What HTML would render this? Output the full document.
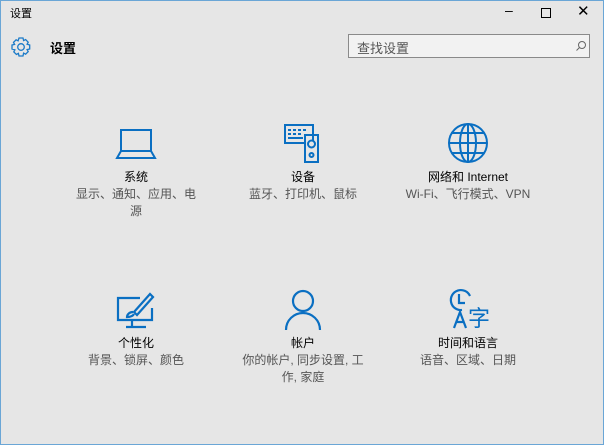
<html><head><style>
body{margin:0;width:604px;height:445px;background:#e6e6e6;font-family:"Liberation Sans","Noto Sans CJK SC",sans-serif;overflow:hidden;position:relative}
.win{position:absolute;left:0;top:0;width:602px;height:443px;border:1px solid #6aa6d6;border-top:1px solid #6aa6d6}
.t{position:absolute;font-size:11px;color:#000}
.item{position:absolute;width:150px;text-align:center;font-size:12px;line-height:17px}
.item .h{color:#000}
.item .s{color:#555}
.item svg{display:block;margin:0 auto 5px}
</style></head><body><div class="win"></div>
<div class="t" style="left:10px;top:5px">设置</div>
<div class="t" style="left:505px;top:2px;font-size:14px">–</div>
<div style="position:absolute;left:541px;top:8px;width:8px;height:8px;border:1px solid #000"></div>
<div class="t" style="left:577px;top:2px;font-size:15px">✕</div>
<svg style="position:absolute;left:10px;top:36px" width="22" height="22" viewBox="0 0 22 22"><g fill="none" stroke="#1a7ac8" stroke-width="1.3"><path d="M9 2h4l.6 2.6 2-1 2.6 2.6-1.1 2 2.6.8v4l-2.6.6 1.1 2-2.6 2.6-2-1.1L13 20H9l-.6-2.6-2 1.1-2.6-2.6 1.1-2L2 13V9l2.6-.6-1.1-2 2.6-2.6 2 1z"/><circle cx="11" cy="11" r="3.3"/></g></svg>
<div class="t" style="left:50px;top:38px;font-size:13px;font-weight:bold">设置</div>
<div style="position:absolute;left:348px;top:34px;width:242px;height:24px;border:1px solid #8a8a8a;background:#f2f2f2;box-sizing:border-box"></div>
<div class="t" style="left:357px;top:38px;font-size:13px;color:#555">查找设置</div>
<svg style="position:absolute;left:575px;top:40px" width="12" height="12"><circle cx="7" cy="5" r="3.5" fill="none" stroke="#666"/><path d="M4.5 7.5L1.5 10.5" stroke="#666"/></svg>

<div class="item" style="left:61px;top:124px"><svg width="44" height="40" viewBox="0 0 44 40"><g fill="none" stroke="#0a6fc2" stroke-width="2"><rect x="7" y="6" width="30" height="21"/><path d="M7 27L3 34h38l-4-7"/></g></svg><div class="h">系统</div><div class="s">显示、通知、应用、电<br>源</div></div>
<div class="item" style="left:228px;top:122px"><svg width="44" height="42" viewBox="0 0 44 42"><g fill="none" stroke="#0a6fc2" stroke-width="2"><path d="M32 19V3H4v18h20"/><rect x="24" y="13" width="13" height="27"/><circle cx="30.5" cy="22" r="3.5"/><circle cx="30.5" cy="33" r="2"/></g><g fill="#0a6fc2"><rect x="7" y="7" width="3" height="2"/><rect x="12" y="7" width="3" height="2"/><rect x="17" y="7" width="3" height="2"/><rect x="22" y="7" width="3" height="2"/><rect x="7" y="11" width="3" height="2"/><rect x="12" y="11" width="3" height="2"/><rect x="17" y="11" width="3" height="2"/><rect x="7" y="15" width="15" height="2"/></g></svg><div class="h">设备</div><div class="s">蓝牙、打印机、鼠标</div></div>
<div class="item" style="left:393px;top:122px"><svg width="44" height="42" viewBox="0 0 44 42"><g fill="none" stroke="#0a6fc2" stroke-width="2"><circle cx="22" cy="21" r="19"/><ellipse cx="22" cy="21" rx="8" ry="19"/><path d="M3 21h38M6 11h32M6 31h32M22 2v38"/></g></svg><div class="h">网络和 Internet</div><div class="s">Wi-Fi、飞行模式、VPN</div></div>

<div class="item" style="left:61px;top:290px"><svg width="44" height="40" viewBox="0 0 44 40"><g fill="none" stroke="#0a6fc2" stroke-width="2.2"><path d="M26 8H4v22h34V18"/><path d="M18 30v6M12 37h20"/><path d="M20 22l16-18 3 3-16 18z"/><path d="M19 22c-4 0-6 3-6 5 3 0 6-1 7-3"/></g></svg><div class="h">个性化</div><div class="s">背景、锁屏、颜色</div></div>
<div class="item" style="left:228px;top:288px"><svg width="44" height="42" viewBox="0 0 44 42"><g fill="none" stroke="#0a6fc2" stroke-width="2.2"><circle cx="22" cy="13" r="10"/><path d="M5 42c0-10 8-17 17-17s17 7 17 17"/></g></svg><div class="h">帐户</div><div class="s">你的帐户, 同步设置, 工<br>作, 家庭</div></div>
<div class="item" style="left:393px;top:288px"><svg width="44" height="42" viewBox="0 0 44 42"><g fill="none" stroke="#0a6fc2" stroke-width="2.2"><path d="M16 22A10 10 0 1 1 24 8"/><path d="M13 6v9h6"/><path d="M8 40l6-16 6 16M10 34h8"/></g><text x="22" y="38" font-size="22" font-family="Noto Sans CJK SC" fill="#0a6fc2">字</text></svg><div class="h">时间和语言</div><div class="s">语音、区域、日期</div></div>
</body></html>
